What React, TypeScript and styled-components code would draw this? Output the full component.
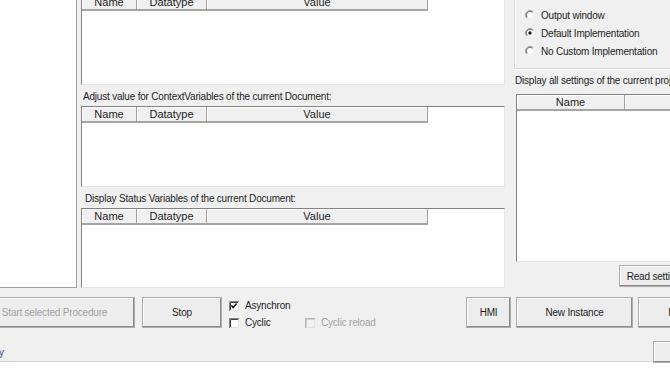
import styled, { createGlobalStyle } from "styled-components";

const GlobalStyle = createGlobalStyle`
  html, body {
    margin: 0;
    padding: 0;
  }
  body {
    width: 670px;
    height: 377px;
    overflow: hidden;
    background: #fff;
    font-family: "Liberation Sans", Arial, sans-serif;
  }
`;

// the screenshot is a crop of a larger form, so the window starts above and left of the viewport
const Window = styled.div`
  display: flex;
  flex-direction: column;
  box-sizing: border-box;
  width: 790px;
  height: 389px;
  margin: -27px 0 0 -30px;
  padding-right: 5px;
  background: #f0f0f0;
  border-bottom: 1px solid #d6d6d6;
  color: #1e1e1e;
  font-size: 10px;
  letter-spacing: -0.2px;
`;

const MainRow = styled.div`
  display: flex;
  flex: none;
  height: 315px;
`;

const LeftList = styled.div`
  box-sizing: border-box;
  width: 107px;
  flex: none;
  background: #fff;
  border: 1px solid #a0a0a0;
  border-top: none;
`;

const CenterColumn = styled.div`
  display: flex;
  flex-direction: column;
  width: 424px;
  flex: none;
  margin-left: 4px;
`;

const SectionLabel = styled.div<{ $h?: number; $pl?: number }>`
  box-sizing: border-box;
  height: ${({ $h }) => $h ?? 21}px;
  padding: 6px 0 0 ${({ $pl }) => $pl ?? 3}px;
  line-height: 12px;
  white-space: nowrap;
  flex: none;
`;

const TableFrame = styled.div<{ $h: number; $ml?: number }>`
  box-sizing: border-box;
  height: ${({ $h }) => $h}px;
  margin-left: ${({ $ml }) => $ml ?? 0}px;
  flex: none;
  background: #fff;
  border: 1px solid;
  border-color: #828282 #e6e6e6 #e6e6e6 #828282;
  overflow: hidden;
`;

const HeaderRow = styled.div`
  display: flex;
  height: 16px;
`;

const HeaderCell = styled.div<{ $w: number }>`
  box-sizing: border-box;
  width: ${({ $w }) => $w}px;
  flex: none;
  height: 16px;
  background: #f0f0f0;
  border-right: 1px solid #a0a0a0;
  border-bottom: 2px solid #a6a6a6;
  box-shadow: inset 1px 1px 0 #fff;
  text-align: center;
  line-height: 14px;
  font-size: 11px;
  letter-spacing: 0;
  white-space: nowrap;
`;

const RightColumn = styled.div`
  display: flex;
  flex-direction: column;
  flex: 1;
  margin-left: 9px;
`;

const GroupBox = styled.div`
  box-sizing: border-box;
  height: 96px;
  flex: none;
  padding: 33px 0 0 10px;
  border: 1px solid #d5d5d5;
  border-top: none;
  box-shadow: inset 1px 1px 0 #fff, 1px 1px 0 #fff;
`;

const OptionRow = styled.div<{ $gap?: number }>`
  display: flex;
  align-items: center;
  gap: ${({ $gap }) => $gap ?? 6}px;
  height: 18px;
  white-space: nowrap;
`;

const Button = styled.button<{ $w: number; $h?: number; $ml?: number; $mt?: number }>`
  box-sizing: border-box;
  flex: none;
  align-self: flex-start;
  width: ${({ $w }) => $w}px;
  height: ${({ $h }) => $h ?? 31}px;
  margin: ${({ $mt }) => $mt ?? 0}px 0 0 ${({ $ml }) => ($ml === undefined ? "0px" : $ml < 0 ? "auto" : `${$ml}px`)};
  padding: 0;
  background: #ededed;
  border: 1px solid #adadad;
  box-shadow: inset -1px -1px 0 #8c8c8c, inset 1px 1px 0 #fdfdfd;
  font: inherit;
  color: inherit;
  letter-spacing: inherit;
  white-space: nowrap;
  overflow: hidden;

  &:disabled {
    color: #a2a2a2;
  }
`;

const BottomRow = styled.div`
  display: flex;
  align-items: flex-start;
  flex: none;
  padding-top: 9px;
`;

const CheckGrid = styled.div`
  display: grid;
  grid-template-columns: 76px auto;
  grid-template-rows: 17px 17px;
  margin-left: 7px;
  flex: none;
`;

const CheckItem = styled.div<{ $disabled?: boolean }>`
  display: flex;
  align-items: center;
  gap: 6px;
  white-space: nowrap;
  color: ${({ $disabled }) => ($disabled ? "#a2a2a2" : "inherit")};
`;

const StatusRow = styled.div`
  display: flex;
  align-items: center;
  flex: none;
  height: 22px;
  margin-top: 10px;
`;

const StatusText = styled.span`
  margin-left: 29px;
  color: #34488a;
`;

function Radio({ checked }: { checked?: boolean }) {
  return (
    <svg width="10" height="10" viewBox="0 0 12 12">
      <circle cx="6" cy="6" r="5.5" fill="#fff" />
      <path d="M9.9 2.1 A5.5 5.5 0 0 0 2.1 9.9" stroke="#a0a0a0" fill="none" />
      <path d="M9.2 2.8 A4.5 4.5 0 0 0 2.8 9.2" stroke="#3c3c3c" fill="none" />
      <path d="M9.2 2.8 A4.5 4.5 0 0 1 2.8 9.2" stroke="#e3e3e3" fill="none" />
      {checked && <circle cx="6" cy="6" r="2" fill="#111" />}
    </svg>
  );
}

function Check({ checked, disabled }: { checked?: boolean; disabled?: boolean }) {
  const dark = disabled ? "#b4b4b4" : "#808080";
  const inner = disabled ? "#cfcfcf" : "#404040";
  return (
    <svg width="10" height="10" viewBox="0 0 10 10">
      <rect x="0" y="0" width="10" height="10" fill={disabled ? "#f0f0f0" : "#fff"} />
      <path d="M0.5 10 V0.5 H10" stroke={dark} fill="none" />
      <path d="M1.5 9 V1.5 H9" stroke={inner} fill="none" />
      <path d="M1 9.5 H9.5 V1" stroke="#e3e3e3" fill="none" />
      {checked && (
        <path d="M2.4 4.6 L4.1 6.6 L7.6 2.6" stroke="#111" strokeWidth="1.5" fill="none" />
      )}
    </svg>
  );
}

function VariableTable({ height }: { height: number }) {
  return (
    <TableFrame $h={height}>
      <HeaderRow>
        <HeaderCell $w={55}>Name</HeaderCell>
        <HeaderCell $w={70}>Datatype</HeaderCell>
        <HeaderCell $w={221}>Value</HeaderCell>
      </HeaderRow>
    </TableFrame>
  );
}

export default function App() {
  return (
    <>
      <GlobalStyle />
      <Window>
        <MainRow>
          <LeftList />
          <CenterColumn>
            <SectionLabel>Adjust value for Variables of the current Document:</SectionLabel>
            <VariableTable height={91} />
            <SectionLabel $pl={2}>Adjust value for ContextVariables of the current Document:</SectionLabel>
            <VariableTable height={81} />
            <SectionLabel $pl={4}>Display Status Variables of the current Document:</SectionLabel>
            <VariableTable height={80} />
          </CenterColumn>
          <RightColumn>
            <GroupBox>
              <OptionRow>
                <Radio />
                Output window
              </OptionRow>
              <OptionRow>
                <Radio checked />
                Default Implementation
              </OptionRow>
              <OptionRow>
                <Radio />
                No Custom Implementation
              </OptionRow>
            </GroupBox>
            <SectionLabel $h={25} $pl={1}>
              Display all settings of the current project:
            </SectionLabel>
            <TableFrame $h={168} $ml={2}>
              <HeaderRow>
                <HeaderCell $w={108}>Name</HeaderCell>
                <HeaderCell $w={131}>Value</HeaderCell>
              </HeaderRow>
            </TableFrame>
            <Button $w={74} $h={22} $ml={105} $mt={3}>
              Read settings
            </Button>
          </RightColumn>
        </MainRow>
        <BottomRow>
          <Button $w={161} $ml={4} disabled>
            Start selected Procedure
          </Button>
          <Button $w={80} $ml={7}>
            Stop
          </Button>
          <CheckGrid>
            <CheckItem>
              <Check checked />
              Asynchron
            </CheckItem>
            <span />
            <CheckItem>
              <Check />
              Cyclic
            </CheckItem>
            <CheckItem $disabled>
              <Check disabled />
              Cyclic reload
            </CheckItem>
          </CheckGrid>
          <Button $w={45} $ml={-1}>
            HMI
          </Button>
          <Button $w={117} $ml={5}>
            New Instance
          </Button>
          <Button $w={117} $ml={5}>
            New Window
          </Button>
        </BottomRow>
        <StatusRow>
          <StatusText>y</StatusText>
          <Button $w={102} $h={22} $ml={-1} />
        </StatusRow>
      </Window>
    </>
  );
}
